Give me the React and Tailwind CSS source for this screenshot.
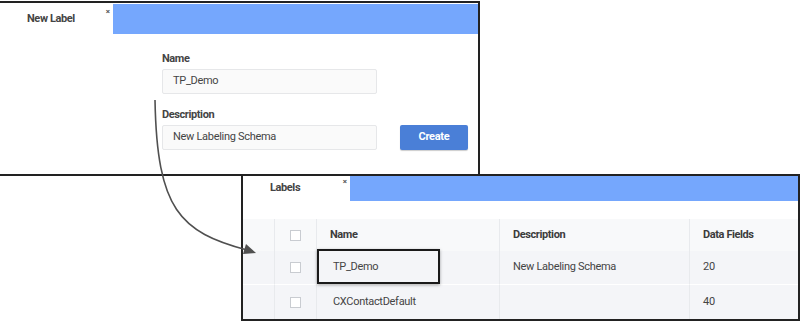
import { Fragment } from 'react'

const BLUE_BAR = '#75a7fd'

const rows = [
  { name: 'TP_Demo', description: 'New Labeling Schema', fields: '20' },
  { name: 'CXContactDefault', description: '', fields: '40' },
]

function Checkbox() {
  return <span className="block h-[11px] w-[11px] border border-[#c9ccd1] bg-white" />
}

function TabBar({ label, tabWidth, height, closeTop }) {
  return (
    <div className="flex" style={{ height }}>
      <div className="relative flex shrink-0 items-center bg-white" style={{ width: tabWidth }}>
        <span className="pl-[27px] text-[11px] font-bold tracking-[-0.4px] text-[#444]">{label}</span>
        <span className="absolute right-[3px] text-[8px] font-bold leading-none text-[#555]" style={{ top: closeTop }}>×</span>
      </div>
      <div className="flex-1" style={{ backgroundColor: BLUE_BAR }} />
    </div>
  )
}

export default function App() {
  return (
    <div className="relative h-[321px] w-[800px] overflow-hidden bg-white font-['Roboto','Liberation_Sans',sans-serif] text-[#444]">
      {/* New Label window */}
      <div className="mt-px flex h-[175px] w-[480px] flex-col border-b-2 border-r-2 border-t-2 border-[#222]">
        <div className="pt-px">
          <TabBar label="New Label" tabWidth={113} height={30} closeTop={4} />
        </div>
        <div className="flex items-end gap-[23px] pl-[162px] pt-[18px]">
          <div className="w-[215px]">
            <p className="h-[14px] text-[11px] font-bold leading-[14px] tracking-[-0.4px] text-[#444]">Name</p>
            <div className="mt-[3px] flex h-[25px] items-center rounded-[2px] border border-[#e6e7e9] bg-[#fafafa] pl-[10px] text-[11px] tracking-[-0.3px]">
              TP_Demo
            </div>
            <p className="mt-[14px] h-[14px] text-[11px] font-bold leading-[14px] tracking-[-0.4px] text-[#444]">Description</p>
            <div className="mt-[3px] flex h-[25px] items-center rounded-[2px] border border-[#e6e7e9] bg-[#fafafa] pl-[10px] text-[11px] tracking-[-0.3px]">
              New Labeling Schema
            </div>
          </div>
          <button className="flex h-[25px] w-[68px] items-center justify-center rounded-[2px] bg-[#4a7fd7] text-[11px] font-bold tracking-[-0.3px] text-white shadow-[0_1px_1px_rgba(0,0,0,0.2)]">
            Create
          </button>
        </div>
      </div>

      {/* Labels window */}
      <div className="-mt-[2px] ml-[241px] h-[147px] w-[559px] border-2 border-[#222]">
        <TabBar label="Labels" tabWidth={107} height={25} closeTop={2} />
        <div className="h-[18px]" />
        <div className="grid grid-cols-[31px_42px_183px_190px_1fr] text-[11px] tracking-[-0.3px]">
          <div className="h-[32px] bg-[#f8f9fa]" />
          <div className="flex h-[32px] items-center justify-center border-l border-[#e8eaed] bg-[#f8f9fa]">
            <Checkbox />
          </div>
          <div className="flex h-[32px] items-center border-l border-[#e8eaed] bg-[#f8f9fa] pl-[13px] font-bold tracking-[-0.4px] text-[#3c3c3c]">Name</div>
          <div className="flex h-[32px] items-center border-l border-[#e8eaed] bg-[#f8f9fa] pl-[13px] font-bold tracking-[-0.4px] text-[#3c3c3c]">Description</div>
          <div className="flex h-[32px] items-center border-l border-[#e8eaed] bg-[#f8f9fa] pl-[13px] font-bold tracking-[-0.4px] text-[#3c3c3c]">Data Fields</div>
          {rows.map((r, i) => (
            <Fragment key={r.name}>
              <div className={`h-[34px] bg-[#f4f5f8] ${i === 0 ? 'border-b border-white' : ''}`} />
              <div className={`flex h-[34px] items-center justify-center border-l border-[#e8eaed] bg-[#f4f5f8] ${i === 0 ? 'border-b border-b-white' : ''}`}>
                <Checkbox />
              </div>
              <div className={`flex h-[34px] items-center border-l border-[#e8eaed] bg-[#f4f5f8] pl-[16px] ${i === 0 ? 'border-b border-b-white' : ''}`}>{r.name}</div>
              <div className={`flex h-[34px] items-center border-l border-[#e8eaed] bg-[#f4f5f8] pl-[13px] ${i === 0 ? 'border-b border-b-white' : ''}`}>{r.description}</div>
              <div className={`flex h-[34px] items-center border-l border-[#e8eaed] bg-[#f4f5f8] pl-[13px] ${i === 0 ? 'border-b border-b-white' : ''}`}>{r.fields}</div>
            </Fragment>
          ))}
        </div>
      </div>

      {/* callout box around the new row */}
      <div className="pointer-events-none absolute left-[317px] top-[249px] h-[35px] w-[123px] border-2 border-[#1a1a1a] shadow-[0_1px_3px_rgba(0,0,0,0.35)]" />

      {/* connecting arrow */}
      <svg className="pointer-events-none absolute left-0 top-0" width="800" height="321" viewBox="0 0 800 321">
        <path d="M155 100 C157 210 180 232 247 250" fill="none" stroke="#505050" strokeWidth="1.6" />
        <polygon points="256,253 243,254 246,244" fill="#505050" />
      </svg>
    </div>
  )
}
